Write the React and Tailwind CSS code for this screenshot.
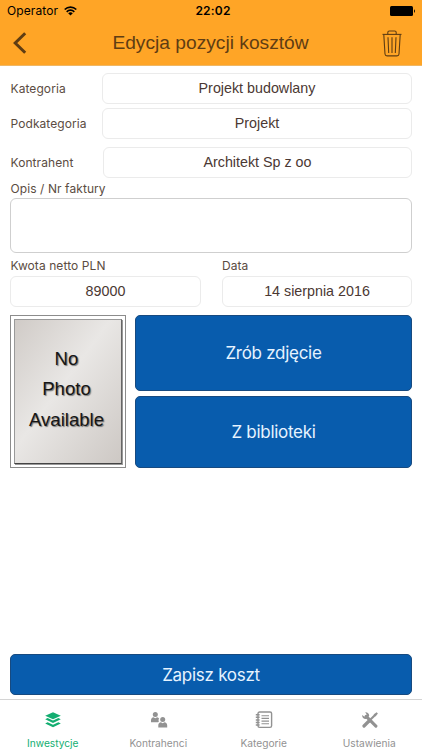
const TABS = [
  { label: 'Inwestycje', icon: LayersIcon, active: true },
  { label: 'Kontrahenci', icon: PeopleIcon },
  { label: 'Kategorie', icon: NotebookIcon },
  { label: 'Ustawienia', icon: ToolsIcon },
];

function LayersIcon() {
  return (
    <svg width="16" height="16" viewBox="0 0 16 16" fill="currentColor">
      <path d="M8 0.3 15.8 3.8 8 7.3 0.2 3.8Z" />
      <path d="M0.2 7.2 2.6 6 8 8.4 13.4 6 15.8 7.2 8 10.9Z" />
      <path d="M0.2 11.5 2.6 10.3 8 12.7 13.4 10.3 15.8 11.5 8 15.2Z" />
    </svg>
  );
}

function PeopleIcon() {
  return (
    <svg width="18" height="16" viewBox="0 0 18 16" fill="currentColor">
      <circle cx="5.3" cy="2.6" r="2.5" />
      <path d="M1 10.3V8.2C1 6.4 2.1 5.4 3.5 5.2L5.3 6.2 7.1 5.2C8 5.4 8.8 5.9 9.1 6.7 8.4 7.5 8.4 8.4 8.9 9.4L8.1 10.3Z" />
      <circle cx="12.7" cy="7.6" r="2.5" />
      <path d="M8.3 15.4V13.2C8.3 11.4 9.5 10.4 10.9 10.2L12.7 11.2 14.5 10.2C16 10.4 17.2 11.4 17.2 13.2V15.4Z" />
    </svg>
  );
}

function NotebookIcon() {
  return (
    <svg width="18" height="18" viewBox="0 0 18 18" fill="none" stroke="currentColor">
      <rect x="3" y="1" width="13.6" height="15.4" rx="1.6" strokeWidth="1.4" />
      <path d="M0.8 3.7H4.6M0.8 6.3H4.6M0.8 8.9H4.6M0.8 11.5H4.6M0.8 14.1H4.6" strokeWidth="1.5" />
      <path d="M6.5 4.7H14M6.5 7.4H14M6.5 10.1H14M6.5 12.8H14" strokeWidth="1.1" />
    </svg>
  );
}

function ToolsIcon() {
  return (
    <svg width="16" height="16" viewBox="0 0 16 16" fill="none" stroke="currentColor">
      <path d="M4.2 4.4 13.9 14.1" strokeWidth="3.1" strokeLinecap="round" />
      <path d="M3.2 0.2C5.8 0 7.5 1.9 7.1 4.1L4.3 7C1.8 7.4 -0.1 5.6 0.2 3L2.5 4.7 4.7 2.5Z" fill="currentColor" stroke="none" />
      <path d="M13.6 2.4 8 8" strokeWidth="2.1" />
      <path d="M11.6 2.6 14.6 0.2 15.9 1.5 13.5 4.5Z" fill="currentColor" stroke="none" />
      <path d="M7 9 2 14" strokeWidth="3.2" strokeLinecap="round" />
    </svg>
  );
}

function WifiIcon() {
  return (
    <svg width="13" height="10" viewBox="0 0 13 10" fill="none" stroke="#000" strokeWidth="1.7">
      <path d="M0.7 3.5C4 0.2 9 0.2 12.3 3.5" />
      <path d="M2.7 5.8C4.9 3.6 8.1 3.6 10.3 5.8" />
      <path d="M6.5 9.6 4.2 7.3C5.6 6 7.4 6 8.8 7.3Z" fill="#000" stroke="none" />
    </svg>
  );
}

function BatteryIcon() {
  return (
    <svg width="26" height="10" viewBox="0 0 26 10">
      <rect x="0" y="0" width="23" height="10" rx="1.5" />
      <path d="M24 3.2C25.3 3.6 25.3 6.4 24 6.8Z" />
    </svg>
  );
}

function TrashIcon() {
  return (
    <svg width="20" height="27" viewBox="0 0 20 27" fill="none" stroke="#5f3d13" strokeWidth="1.1">
      <path d="M0.5 4.4H19.5" />
      <path d="M5.8 4.2V2.5C5.8 1.5 6.4 1 7.3 1H12.7C13.6 1 14.2 1.5 14.2 2.5V4.2" />
      <path d="M1.8 4.6 3 24C3.1 25.3 3.8 25.9 5 25.9H15C16.2 25.9 16.9 25.3 17 24L18.2 4.6" />
      <path d="M6 7.3 6.7 23M10 7.3V23M14 7.3 13.3 23" />
    </svg>
  );
}

function Label({ className = '', children }) {
  return <label className={`pl-[0.5px] text-[12px] leading-4 tracking-[0.08px] text-[#5b4c42] ${className}`}>{children}</label>;
}

function Field({ className = '', children }) {
  return (
    <div className={`flex h-[31px] items-center justify-center rounded-md border border-[#ebebeb] font-['Liberation_Sans',sans-serif] text-[14.3px] text-[#4b3833] ${className}`}>
      {children}
    </div>
  );
}

function Button({ className = '', children }) {
  return (
    <button className={`flex w-full items-center justify-center rounded-[5px] border border-[#174a80] bg-[#085cad] pt-[2px] text-[17px] tracking-[-0.28px] text-[#e6f3ff] ${className}`}>
      {children}
    </button>
  );
}

export default function App() {
  return (
    <div className="flex h-[750px] w-[422px] flex-col overflow-hidden bg-white font-['Inter',sans-serif]">
      <header className="h-[66px] shrink-0 border-b border-[#efb765] bg-[#ffa526]">
        <div className="grid h-[22px] grid-cols-3 items-center pr-[6px] pl-[7px] text-[12px] text-black">
          <div className="flex items-center gap-[6px]">
            <span className="tracking-[0.1px]">Operator</span>
            <WifiIcon />
          </div>
          <span className="pl-[3px] text-center font-semibold tracking-[0.2px]">22:02</span>
          <div className="flex justify-end">
            <BatteryIcon />
          </div>
        </div>
        <div className="flex h-[42px] items-center justify-between pr-[20px] pl-[13px]">
          <svg width="14" height="22" viewBox="0 0 14 22" fill="none" stroke="#5f3d13" strokeWidth="3">
            <path d="M12.2 1.2 2.2 11 12.2 20.8" />
          </svg>
          <h1 className="pl-[12px] font-['Liberation_Sans',sans-serif] text-[19.2px] text-[#5f3d13]">Edycja pozycji kosztów</h1>
          <TrashIcon />
        </div>
      </header>

      <main className="flex flex-1 flex-col px-[10px] pt-[7px]">
        <div className="flex items-center">
          <Label className="w-[92px]">Kategoria</Label>
          <Field className="flex-1">Projekt budowlany</Field>
        </div>
        <div className="mt-1 flex items-center">
          <Label className="w-[92px]">Podkategoria</Label>
          <Field className="flex-1">Projekt</Field>
        </div>
        <div className="mt-2 flex items-center">
          <Label className="w-[93px]">Kontrahent</Label>
          <Field className="flex-1">Architekt Sp z oo</Field>
        </div>

        <Label className="mt-[3px]">Opis / Nr faktury</Label>
        <div className="mt-[1px] h-[55px] rounded-md border border-[#cfcfcf]" />

        <div className="mt-[5px] flex justify-between">
          <div className="flex w-[191px] flex-col gap-[2px]">
            <Label>Kwota netto PLN</Label>
            <Field>89000</Field>
          </div>
          <div className="flex w-[190px] flex-col gap-[2px]">
            <Label className="-ml-[0.5px]">Data</Label>
            <Field>14 sierpnia 2016</Field>
          </div>
        </div>

        <div className="mt-2 flex gap-[9px]">
          <div className="h-[153px] w-[116px] border border-[#8c8c8c] p-[3px]">
            <div className="flex h-full flex-col items-center justify-center border border-[#999] border-r-[#666] border-b-[#444] bg-linear-to-br from-[#d0cbc7] via-[#e9e7e5] via-45% to-[#cdc8c4] pr-[3px] pb-[4px] font-['Liberation_Sans',sans-serif] text-[18.6px] leading-[30.5px] text-[#161616] shadow-[1px_1px_0_#999] [text-shadow:1px_1px_1px_#777]">
              <span>No</span>
              <span>Photo</span>
              <span>Available</span>
            </div>
          </div>
          <div className="flex flex-1 flex-col gap-[5px]">
            <Button className="h-[76px]">Zrób zdjęcie</Button>
            <Button className="h-[72px]">Z biblioteki</Button>
          </div>
        </div>

        <Button className="mt-auto mb-1 h-[41px]">Zapisz koszt</Button>
      </main>

      <nav className="grid h-[51px] shrink-0 grid-cols-4 border-t border-[#d4d4d4]">
        {TABS.map(({ label, icon: Icon, active }) => (
          <div key={label} className={`flex flex-col items-center ${active ? 'text-[#13ae71]' : 'text-[#929292]'}`}>
            <div className="flex h-[36px] items-center pt-[3px] pl-px">
              <Icon />
            </div>
            <span className="text-[10.2px] leading-[14px]">{label}</span>
          </div>
        ))}
      </nav>
    </div>
  );
}
